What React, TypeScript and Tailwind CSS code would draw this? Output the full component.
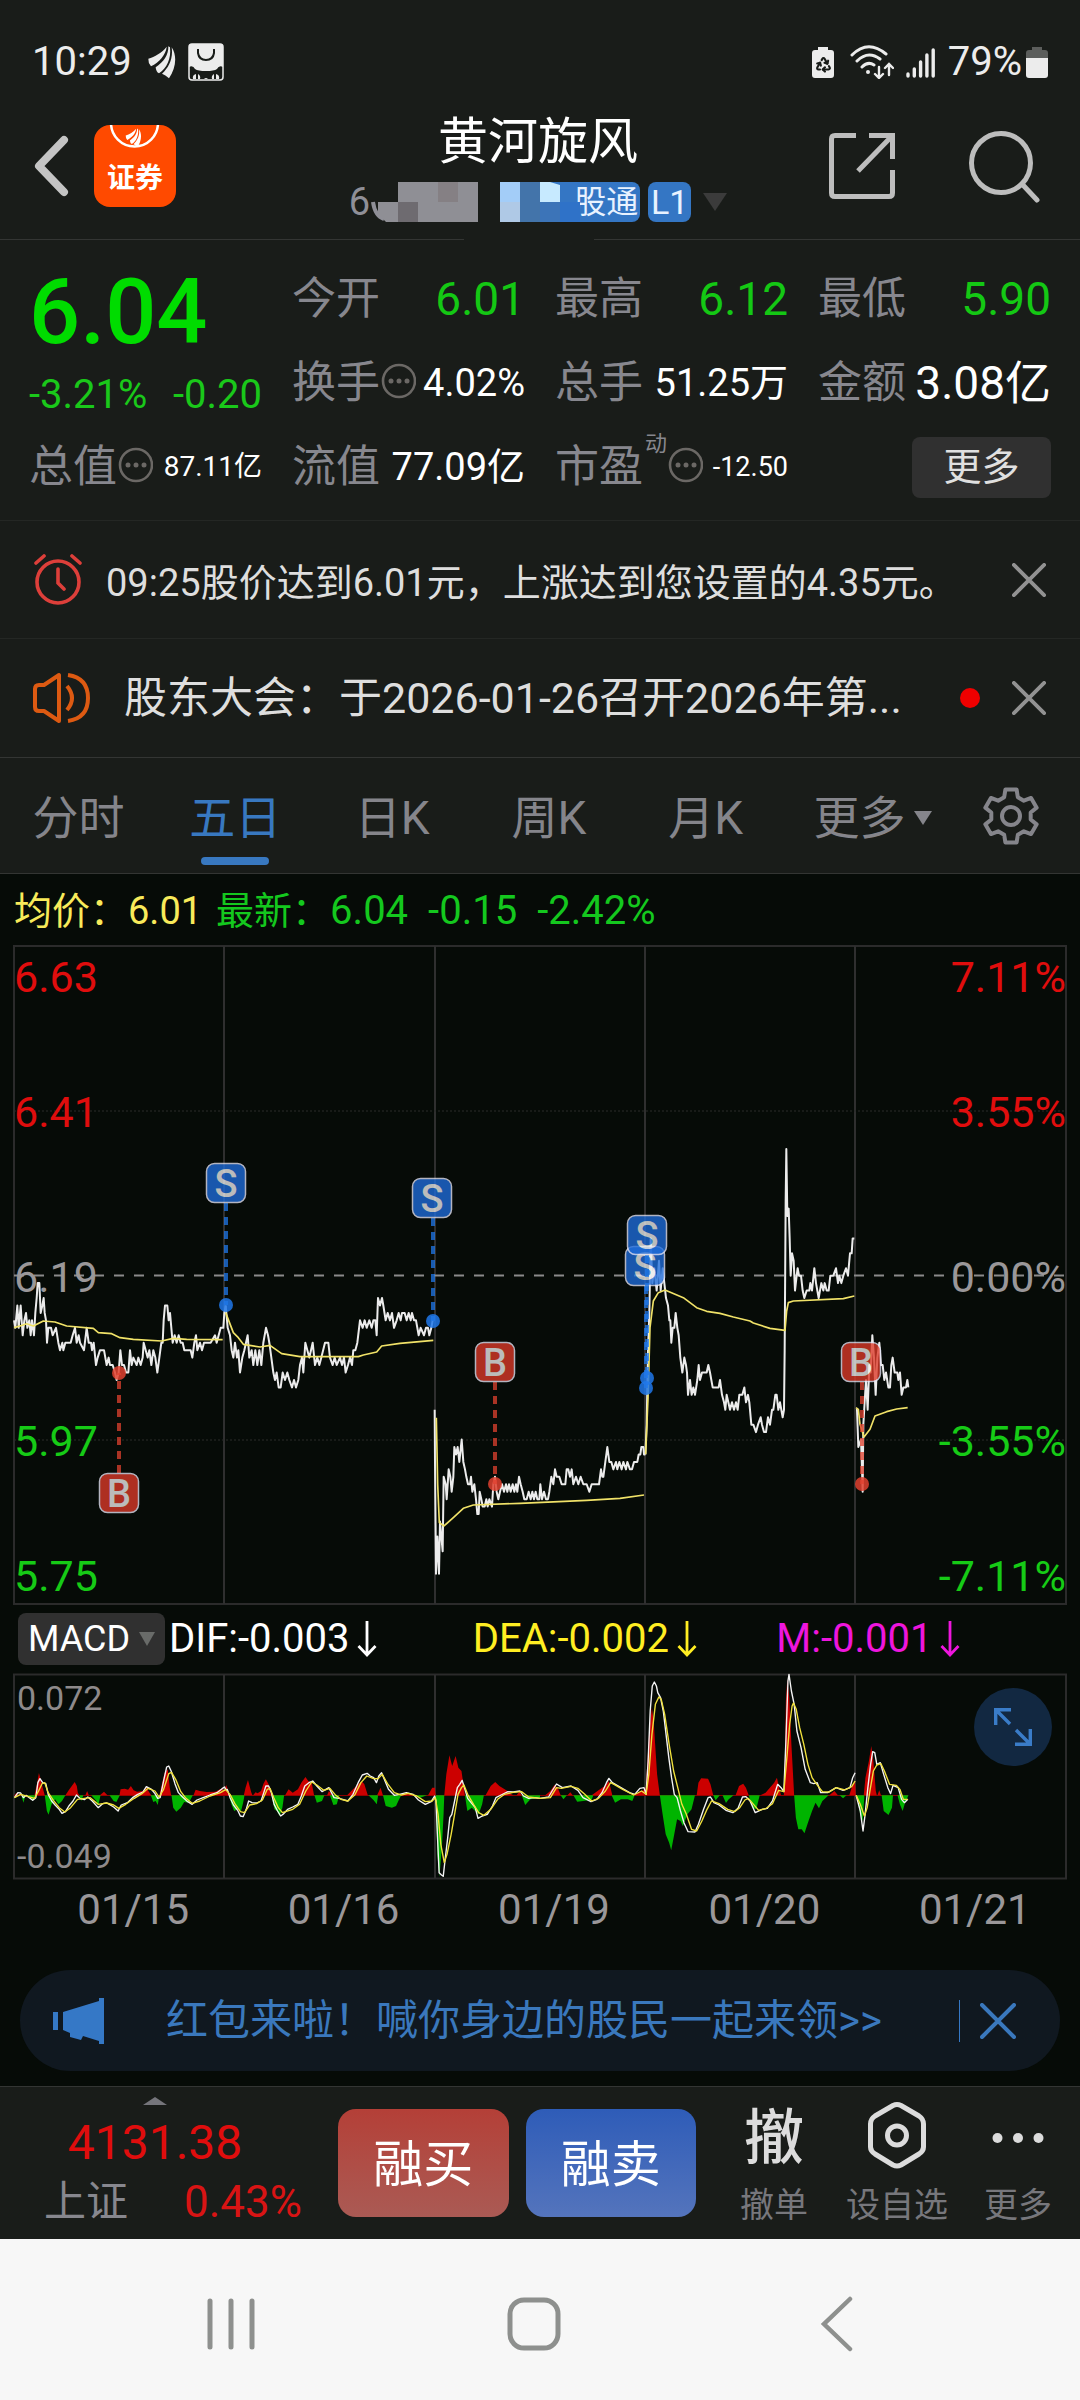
import React, { useState } from 'react';
import { Recycle } from 'lucide-react';

// --- Configuration ---
const TABS = ['分时', '五日', '日K', '周K', '月K', '更多'];
const DATES = ['01/15', '01/16', '01/19', '01/20', '01/21'];
const DAY_LINES = [14, 224, 435, 645, 855, 1066];

// --- Price data: "x,ticks below 6.19" for every trading day ---
const PRICE_DAYS = [
  {
    origin: 0,
    points:
      '42,6 46,7 52,4 56,7 62,4 68,8 73,6 78,5 82,7 88,6 92,8 96,6 102,8 106,5 110,3 113,1 118,1 122,5 127,4 131,3 134,5 138,6 141,9 145,7 153,7 158,8 168,7 175,9 180,10 187,9 190,10 196,9 212,9 218,8 225,7 230,9 236,8 240,9 252,10 260,7 266,9 273,9 276,10 281,9 288,12 293,11 300,10 312,10 320,12 326,11 330,12 338,12 345,13 350,14 356,13 361,10 366,12 372,12 378,13 385,13 390,10 395,12 400,11 410,12 415,11 422,12 428,11 431,9 437,10 443,11 448,10 454,12 460,10 466,11 472,13 478,11 484,9 488,9 491,6 495,4 502,4 506,6 510,5 514,7 518,9 524,8 530,9 536,8 542,9 548,9 553,10 572,10 577,11 583,9 588,8 592,10 600,9 606,10 612,9 632,9 645,8 650,9 656,8 662,7 670,7 673,5 677,4',
    average:
      '42,590 60,585 80,578 100,585 130,570 165,573 200,585 280,592 295,605 335,608 360,620 400,625 485,630 520,622 560,625 668,626',
  },
  {
    origin: 0,
    points:
      '677,4 683,7 690,8 695,10 700,11 705,9 711,11 715,10 720,13 727,11 733,10 738,9 743,8 748,11 755,10 760,12 766,10 772,12 778,10 784,12 790,9 798,7 804,8 808,9 814,11 820,13 825,14 830,13 836,15 842,15 848,13 855,14 862,13 868,14 876,15 882,14 888,15 895,14 900,12 906,11 910,13 916,9 922,10 928,11 933,10 938,9 945,12 952,11 958,12 964,11 975,9 985,9 990,11 998,12 1004,11 1010,12 1020,11 1026,12 1032,11 1037,13 1044,12 1050,11 1056,12 1060,10 1066,10 1072,9 1080,6 1088,7 1094,6 1100,7 1108,6 1115,7 1120,6 1126,6 1130,8 1134,3 1140,4 1146,3 1150,4 1157,6 1163,5 1170,6 1176,5 1182,7 1190,6 1196,5 1202,6 1206,5 1214,5 1220,6 1226,5 1232,6 1236,5 1242,6 1248,6 1256,8 1262,7 1272,8 1278,7 1284,7 1288,8 1294,7 1298,6',
    average:
      '677,545 700,605 715,620 730,640 780,648 810,643 845,668 900,677 1075,677 1090,672 1130,663 1145,645 1200,637 1300,628',
  },
  {
    origin: 420,
    points:
      '44,18 45,25 48,40 52,35 57,40 60,33 64,35 68,37 71,27 77,28 80,30 86,26 91,27 95,29 100,27 103,23 108,24 113,23 118,25 125,22 130,25 135,26 139,27 144,28 150,28 153,27 157,29 163,28 168,30 172,32 176,32 179,29 184,30 188,31 194,31 199,30 203,31 208,30 216,31 220,28 225,27 230,29 235,30 240,29 246,28 252,29 258,28 262,29 267,28 272,29 278,28 283,29 288,28 292,29 297,27 302,28 308,29 313,30 320,30 326,29 332,30 337,29 342,30 347,29 352,30 358,30 361,28 366,30 372,29 378,30 384,30 388,29 394,27 400,28 405,26 410,27 418,27 425,28 436,28 440,26 445,26 450,27 455,26 460,28 468,27 475,28 482,27 490,28 500,28 508,29 515,28 537,28 543,26 547,27 550,27 556,25 562,23 568,25 574,25 580,26 588,25 592,26 598,25 605,26 610,25 618,26 622,25 630,26 636,26 642,25 652,25 656,24 661,24 664,23 670,23 672,24 676,24',
    average:
      '49,860 53,1060 58,1175 72,1185 100,1160 130,1132 160,1122 300,1117 500,1108 600,1102 672,1092',
  },
  {
    origin: 420,
    points:
      '676,24 680,20 684,10 688,5 692,-5 697,1 703,-1 710,2 717,-2 722,2 728,-1 733,1 738,3 744,4 748,6 751,6 754,9 758,7 763,7 767,5 772,7 776,8 781,11 787,13 793,11 798,12 801,13 804,16 810,14 815,16 820,15 825,16 832,14 836,12 840,14 846,13 860,13 865,12 870,13 878,15 896,15 900,14 906,16 912,17 916,18 920,16 925,17 930,18 936,17 942,18 948,17 953,18 958,16 967,16 973,15 978,17 984,16 988,17 994,20 1000,20 1008,21 1014,20 1022,19 1026,20 1032,21 1038,21 1044,19 1050,20 1056,18 1060,18 1066,16 1070,16 1075,18 1080,17 1088,19 1092,18 1094,10 1097,-10 1099,-17 1102,-8 1106,-9 1109,-5 1112,0 1116,-3 1121,-2 1125,2 1130,0 1133,-1 1137,0 1143,0 1148,2 1153,3 1160,2 1168,2 1171,1 1176,2 1183,-1 1188,1 1196,3 1204,1 1210,2 1214,1 1220,2 1226,2 1231,0 1240,0 1248,-1 1254,1 1258,0 1264,1 1270,0 1278,-1 1284,0 1290,-3 1295,-3 1298,-5 1303,-5',
    average:
      '677,970 684,800 690,590 700,510 715,485 735,477 790,500 830,530 860,541 900,547 940,558 990,570 1000,576 1050,592 1095,598 1100,540 1105,515 1120,510 1270,503 1303,495',
  },
  {
    origin: 640,
    points:
      '648,18 651,18 655,23 663,22 666,26 668,29 670,20 674,17 678,14 683,18 688,12 692,13 697,8 702,11 707,16 712,11 718,9 723,12 728,12 733,14 738,13 745,15 750,15 754,12 758,11 764,13 772,13 775,14 780,13 785,16 790,15 798,15 802,14 805,15',
    average: '648,830 655,835 660,880 672,918 690,895 705,855 740,842 770,834 803,830',
  },
];

const MARKERS = [
  { side: 'B', x: 119, boxY: 548, dotX: 119, dotY: 428 },
  { side: 'S', x: 226, boxY: 238, dotX: 226, dotY: 360 },
  { side: 'S', x: 432, boxY: 253, dotX: 433, dotY: 376 },
  { side: 'B', x: 495, boxY: 417, dotX: 495, dotY: 539 },
  { side: 'S', x: 645, boxY: 321, dotX: 646, dotY: 443 },
  { side: 'S', x: 647, boxY: 290, dotX: 647, dotY: 433 },
  { side: 'B', x: 861, boxY: 417, dotX: 862, dotY: 539 },
];

const PRICE_LABELS = [
  { y: 47, price: '6.63', pct: '7.11%', fill: '#e00d0d' },
  { y: 182, price: '6.41', pct: '3.55%', fill: '#e00d0d' },
  { y: 347, price: '6.19', pct: '0.00%', fill: '#9a9799' },
  { y: 511, price: '5.97', pct: '-3.55%', fill: '#16cb16' },
  { y: 646, price: '5.75', pct: '-7.11%', fill: '#16cb16' },
];

// --- MACD data, left and right half of the panel ---
const MACD_HALVES = [
  {
    origin: 0,
    red: 'M42,583 48,575 52,583M100,583 108,545 113,516 118,535 124,560 130,583M190,583 200,567 210,553 217,543 223,555 226,575 230,583M248,583 253,570 258,583M290,583 302,572 312,583M347,583 350,565 362,563 372,566 380,555 388,568 398,572 415,570 425,560 437,580 440,583M463,583 470,550 478,515 487,505 493,560 497,583M562,583 568,566 580,570 600,573 625,572 645,562 650,570 657,552 663,570 668,583M708,583 713,560 720,537 726,560 730,575 733,583M735,583 742,574 748,577 758,570 765,548 772,535 780,550 787,583M828,583 838,565 850,575 865,565 875,545 887,528 895,540 905,545 912,583M950,583 955,570 960,575 964,583M1008,583 1025,565 1040,550 1050,540 1058,550 1068,583M1095,583 1105,560 1112,583M1165,583 1180,574 1195,583M1243,583 1255,560 1263,560 1265,583M1290,583 1296,520 1305,463 1313,495 1323,465 1331,500 1340,510 1350,583M1410,583 1425,555 1438,543 1450,555 1470,568 1485,580 1490,583M1500,583 1508,572 1515,583',
    green:
      'M62,583 68,605 74,583M78,583 90,590 95,600 102,583M130,583 136,630 141,641 150,610 160,595 170,610 180,600 190,583M230,583 236,600 242,583M265,583 280,600 285,615 292,583M318,583 330,600 338,603 348,583M438,583 445,603 452,600 458,612 463,583M498,583 503,620 512,632 525,620 535,603 548,605 560,583M665,583 672,610 680,630 690,625 700,630 706,605 710,583M788,583 797,625 804,630 812,645 820,620 825,583M913,583 920,605 935,600 942,583M958,583 968,612 978,610 985,583M1070,583 1085,598 1094,610 1098,583M1112,583 1120,615 1138,620 1150,615 1158,597 1165,583M1200,583 1220,590 1240,583M1265,583 1270,760 1276,827 1283,740 1288,640 1290,583M1350,583 1357,630 1370,620 1390,640 1400,610 1405,583M1515,583 1525,612 1540,595 1568,590 1568,583',
    dif: [
      '42,590 52,575 60,576 68,590 76,583 85,590 95,598 104,590 110,545 116,533 124,545 133,548 140,580 150,600 160,612 172,625 180,637 190,632 200,615 212,600 222,582 232,592 245,596 255,588 268,600 285,620 298,608 310,606 330,618 343,630 352,612 370,605 385,590 400,580 415,573 425,557 440,565 450,578 458,592 465,590 475,540 484,498 490,495 497,510 508,548 518,575 530,588 545,602 558,610 572,597 590,590 610,582 630,575 645,563 652,558 655,565 660,565 668,590 678,612 690,628 698,645 706,647 715,625 722,600 732,605 745,606 758,600 766,575 772,555 780,555 788,575 796,610 806,630 815,645 822,640 835,625 850,618 865,610 875,585 885,555 897,545 908,540 920,555 935,572 955,560 970,590 985,592 1010,600 1025,580 1040,545 1052,522 1066,517 1075,525 1085,530 1093,545 1100,525 1108,515 1118,540 1128,565 1145,583 1160,580 1180,575 1200,580 1215,597 1235,610 1252,602 1262,585 1266,600 1270,700 1275,815 1282,822 1287,826 1292,780 1300,710 1306,650 1312,640 1320,600 1328,560 1335,550 1342,538 1350,565 1358,592 1368,605 1380,620 1388,652 1400,645 1415,640 1430,615 1440,590 1455,582 1475,572 1490,573 1510,570 1520,585 1535,592 1550,590 1568,592',
    ],
    dea: [
      '42,590 60,580 80,586 100,592 112,570 122,548 130,545 140,575 155,598 172,620 188,633 205,620 225,595 245,592 262,590 285,610 310,606 330,612 345,622 365,610 390,592 412,578 430,562 450,570 462,588 475,565 490,518 498,514 510,535 525,572 540,592 558,607 580,600 610,585 640,575 655,566 668,580 682,608 698,632 710,635 725,612 745,608 762,597 776,565 784,562 795,590 808,620 820,635 850,625 870,610 888,570 905,543 920,552 940,568 958,562 975,583 990,595 1010,600 1030,582 1048,545 1065,525 1085,533 1098,533 1110,520 1125,548 1145,575 1165,582 1185,577 1210,585 1235,602 1255,600 1264,590 1272,640 1280,730 1290,785 1298,760 1310,700 1320,640 1330,580 1340,560 1347,552 1358,580 1375,610 1390,635 1405,643 1425,625 1445,595 1465,580 1490,574 1515,572 1535,588 1568,592',
    ],
  },
  {
    origin: 540,
    red: 'M15,583 30,570 42,552 52,562 60,583M80,583 88,574 95,583M150,583 170,568 188,555 200,540 210,583M275,583 290,572 300,568 307,560 312,480 318,380 325,320 330,360 335,440 340,520 348,583M455,583 460,545 468,532 488,533 495,550 503,583M568,583 578,555 590,548 598,560 606,583M640,583 655,575 680,545 688,530 694,560 700,583M708,583 710,540 714,300 718,235 724,290 730,430 738,583M840,583 855,570 865,583M898,583 905,560 915,540 917,583M940,583 945,530 955,480 962,435 968,480 975,570 978,583M980,583 985,568 990,583',
    green:
      'M60,583 68,595 78,583M97,583 108,602 125,600 150,596 155,583M208,583 218,605 235,595 255,595 268,600 275,583M348,583 356,640 365,700 375,725 381,748 388,710 398,655 408,660 415,675 428,640 440,625 450,583M503,583 510,598 522,583M530,583 540,606 548,595 562,583M606,583 618,620 628,625 638,583M738,583 743,650 750,685 760,685 768,697 778,665 790,630 800,605 810,622 820,600 838,583M870,583 880,592 890,583M920,583 930,640 937,660 942,583M992,583 998,630 1012,642 1022,620 1025,583M1038,583 1045,610 1053,630 1060,605 1070,583',
    dif: [
      '0,592 25,588 35,570 48,549 65,560 90,555 110,568 125,590 148,602 165,595 180,575 193,545 200,532 210,545 235,560 260,575 275,580 290,562 302,560 308,580 314,480 320,330 326,255 332,243 338,255 342,275 350,290 358,330 366,400 374,470 382,530 390,580 398,590 408,630 418,665 430,692 450,693 460,670 475,625 488,590 495,588 505,605 520,612 540,628 560,635 575,622 588,588 598,587 610,600 625,635 645,625 660,622 675,600 690,550 700,560 708,572 714,420 720,240 723,220 730,270 738,310 746,390 758,440 770,505 785,545 795,548 805,545 815,575 835,575 860,560 880,568 900,560 908,530 915,515',
      '918,583 930,630 938,690 944,640 952,560 960,490 966,452 972,455 978,490 988,485 998,520 1010,560 1018,578 1025,553 1040,560 1050,595 1058,605 1068,595',
    ],
    dea: [
      '0,592 30,590 48,560 62,562 90,556 110,562 130,580 150,600 170,592 190,570 205,545 215,550 240,565 272,582 295,570 308,580 316,520 325,400 335,310 345,288 352,295 362,340 375,430 388,510 400,560 412,610 425,640 440,685 455,690 470,660 485,625 498,600 520,608 545,625 565,632 580,620 595,597 605,592 620,610 635,628 655,623 675,608 693,568 708,572 716,480 725,370 732,315 736,306 744,325 754,380 766,430 778,490 790,530 802,548 820,572 840,573 860,560 885,567 905,557 915,540',
      '918,583 930,610 942,645 950,620 958,570 968,510 978,492 990,488 1000,510 1015,550 1035,553 1045,565 1055,595 1068,595',
    ],
  },
];

const priceToPoints = (points: string) =>
  points
    .split(' ')
    .map(p => {
      const [x, ticks] = p.split(',').map(Number);
      return `${x},${434 + ticks * 22.35}`;
    })
    .join(' ');

// --- Icons ---
const BirdIcon = ({ className }: { className?: string }) => (
  <svg viewBox="0 0 84 100" className={className} fill="currentColor">
    <path d="M1 40C20 34 42 22 56 4C54 28 34 50 9 63Q0 52 1 40Z" />
    <path d="M61 3C62 30 46 50 23 66Q24 80 33 84C56 70 70 40 66 6Z" />
    <path d="M71 6C76 40 62 66 42 85Q52 88 63 99C84 70 88 30 71 6Z" />
  </svg>
);

const CloseIcon = ({ className }: { className?: string }) => (
  <svg viewBox="0 0 36 36" className={className} stroke="currentColor" strokeWidth="4" strokeLinecap="round">
    <path d="M2 2L34 34M34 2L2 34" />
  </svg>
);

const InfoDots = () => (
  <svg viewBox="0 0 36 36" className="-mt-1 size-9 shrink-0" fill="none">
    <circle cx="19" cy="18" r="16" stroke="#6b6865" strokeWidth="2.6" />
    <g fill="#6b6865">
      <circle cx="11" cy="18" r="2.5" />
      <circle cx="19" cy="18" r="2.5" />
      <circle cx="27" cy="18" r="2.5" />
    </g>
  </svg>
);

const DownArrow = () => (
  <svg viewBox="0 0 20 38" className="ml-2 h-[38px] w-5" fill="none" stroke="currentColor" strokeWidth="2.8">
    <path d="M10 1V35M1.500 26L10 35L18.500 26" />
  </svg>
);

const GearIcon = () => {
  const points = Array.from({ length: 6 }, (_, i) => i * 60 - 90)
    .flatMap(a => [
      [a - 20, 20],
      [a - 12, 27],
      [a + 12, 27],
      [a + 20, 20],
    ])
    .map(([a, r]) => `${30 + r * Math.cos((a * Math.PI) / 180)},${30 + r * Math.sin((a * Math.PI) / 180)}`)
    .join(' ');
  return (
    <svg viewBox="0 0 60 60" className="size-[60px]" fill="none" stroke="#85858b" strokeWidth="4" strokeLinejoin="round">
      <polygon points={points} />
      <circle cx="30" cy="30" r="9" />
    </svg>
  );
};

// --- Sections ---
const StatusBar = () => (
  <div className="flex h-[100px] items-center justify-between px-8 pt-6 text-[40px] leading-none text-[#ececec]">
    <div className="flex items-center">
      <span>10:29</span>
      <BirdIcon className="ml-4 h-[34px] w-7" />
      <svg viewBox="0 0 36 38" className="ml-3 h-[38px] w-9">
        <rect x="1" y="1" width="34" height="36" rx="3" fill="#191c19" stroke="#ececec" strokeWidth="1.5" />
        <path d="M1 3Q1 1 3 1H33Q35 1 35 3V24Q31 22 29 26Q26 28 18 28Q10 28 7 26Q5 22 1 24Z" fill="#ececec" />
        <path d="M10 6V10Q11 17 18 17Q25 17 26 10V6" fill="none" stroke="#191c19" strokeWidth="2" />
        <path d="M5 36Q4 32 8 31V36ZM10 36V31Q13 33 12 36ZM24 36Q23 33 26 31V36ZM28 36V31Q32 32 31 36ZM16 36Q18 34 20 36Z" fill="#ececec" />
      </svg>
    </div>
    <div className="flex items-center">
      <div className="relative">
        <svg viewBox="0 0 22 32" className="h-8 w-[22px]" fill="currentColor">
          <path d="M6 1H16V4H19Q22 4 22 7V29Q22 32 19 32H3Q0 32 0 29V7Q0 4 3 4H6Z" />
        </svg>
        <Recycle size={17} strokeWidth={3} className="absolute top-[10px] left-[3px] text-[#191c19]" />
      </div>
      <svg viewBox="0 0 44 34" className="ml-4 h-[34px] w-11" fill="none" stroke="currentColor" strokeWidth="3" strokeLinecap="round">
        <path d="M2 10Q18 -6 36 9M7 16Q18 5 30 14M12 22Q18 16 24 20" />
        <circle cx="18" cy="27" r="2" fill="currentColor" stroke="none" />
        <path d="M29 22V32M25 29L29 33L33 29M39 30V20M35 23L39 19L43 23" strokeWidth="2.4" />
      </svg>
      <svg viewBox="0 0 30 32" className="ml-3 h-8 w-[30px]" stroke="currentColor" strokeWidth="3.4" strokeLinecap="round">
        <path d="M2 28V30M8.300 23V30M14.600 16V30M20.900 9V30M27.200 4V30" />
      </svg>
      <span className="ml-3">79%</span>
      <svg viewBox="0 0 22 32" className="ml-1 h-8 w-[22px]">
        <path d="M6 1H16V4H19Q22 4 22 7V12H0V7Q0 4 3 4H6Z" fill="#5c5e5c" />
        <path d="M0 12H22V29Q22 32 19 32H3Q0 32 0 29Z" fill="currentColor" />
      </svg>
    </div>
  </div>
);

const Header = () => (
  <header>
    <div className="grid h-[139px] grid-cols-[1fr_auto_1fr] items-center px-8 pb-2">
      <div className="flex items-center gap-6">
        <button aria-label="返回">
          <svg viewBox="0 0 38 64" className="h-16 w-[38px]" fill="none" stroke="#c4c4c4" strokeWidth="8" strokeLinecap="round" strokeLinejoin="round">
            <path d="M32 6L7 32L32 58" />
          </svg>
        </button>
        <a href="#home" className="relative flex size-[82px] items-end justify-center overflow-hidden rounded-2xl bg-[#ff4a00] pb-3 text-[28px] leading-8 font-bold text-white">
          <svg viewBox="0 0 82 82" className="absolute inset-0 size-full" fill="none" stroke="white" strokeWidth="2.5">
            <path d="M17 -2A23.500 23.500 0 1 0 64 -2" />
          </svg>
          <BirdIcon className="absolute top-[3px] left-[31px] h-[19px] w-[17px]" />
          证券
        </a>
      </div>

      <div className="flex flex-col items-center pr-1">
        <h1 className="text-[50px] leading-[72px] text-white">黄河旋风</h1>
        <div className="flex h-12 items-center text-[38px] leading-10 text-[#8f8f97]">
          <span>6</span>
          <svg viewBox="0 0 110 40" className="h-10 w-[110px]">
            <path d="M3 20Q5 34 14 37" fill="none" stroke="#8f8f97" strokeWidth="4" />
            <path d="M8 20H28V0H108V40H16L8 32Z" fill="#8f8f95" />
            <path d="M68 0H88V20H68Z" fill="#858084" />
            <path d="M28 20H48V40H28Z" fill="#6e6b70" />
          </svg>
          <span className="relative ml-5 flex h-10 w-[140px] items-center justify-end rounded-lg bg-[#3476c4] pr-[2px] text-[32px] text-[#e8f2ff]">
            股通
            <svg viewBox="0 0 80 40" className="absolute top-0 left-0 h-10 w-20">
              <path d="M0 0H20V20H0Z" fill="#a3cdf8" />
              <path d="M0 20H20V40H0Z" fill="#afc9e6" />
              <path d="M20 0H40V40H20Z" fill="#4374aa" />
              <path d="M40 0H50L60 3V20H40Z" fill="#c7eaff" />
              <path d="M40 20H60V40H40Z" fill="#3c74b8" />
              <path d="M60 20H80V40H60Z" fill="#2f72c8" />
            </svg>
          </span>
          <span className="ml-2 flex h-10 w-[43px] items-center justify-center rounded-lg bg-[#3476c4] text-[34px] text-[#e8f2ff]">L1</span>
          <svg viewBox="0 0 24 18" className="ml-3 h-[18px] w-6">
            <path d="M0 0H24L12 18Z" fill="#3b3b3b" />
          </svg>
        </div>
      </div>

      <div className="flex items-center justify-end gap-[72px] pr-2">
        <button aria-label="分享">
          <svg viewBox="0 0 68 68" className="size-[68px]" fill="none" stroke="#bdbdbd" strokeWidth="5">
            <path d="M28 3.500H7Q3.500 3.500 3.500 7V61Q3.500 64.500 7 64.500H61Q64.500 64.500 64.500 61V38M41 3.500H64.500V27M64 4L30 39" strokeLinejoin="miter" />
          </svg>
        </button>
        <button aria-label="搜索">
          <svg viewBox="0 0 72 74" className="h-[74px] w-[72px]" fill="none" stroke="#bdbdbd" strokeWidth="5" strokeLinecap="round">
            <circle cx="33" cy="34" r="29.500" />
            <path d="M54 55L69 71" />
          </svg>
        </button>
      </div>
    </div>
    <div className="flex h-px justify-between">
      <div className="w-[43%] bg-[#333533]" />
      <div className="w-[45%] bg-[#333533]" />
    </div>
  </header>
);

type QuoteProps = { label: string; value: string; valueClass: string; info?: boolean; note?: string };

const Quote: React.FC<QuoteProps> = ({ label, value, valueClass, info, note }) => (
  <div className="flex h-[84px] items-center justify-between whitespace-nowrap">
    <dt className="flex items-center text-[44px] leading-[56px] text-[#87878e]">
      {label}
      {note && <sup className="mb-6 ml-[2px] text-[22px] leading-6">{note}</sup>}
      {info && <InfoDots />}
    </dt>
    <dd className={valueClass}>{value}</dd>
  </div>
);

const QuotePanel = () => (
  <section className="border-b border-[#242724] px-[29px] pt-[17px] pb-[11px]">
    <dl className="grid grid-cols-4 gap-x-[30px]">
      <div className="row-span-2 pt-1 whitespace-nowrap">
        <dd className="text-[90px] leading-[104px] font-medium text-[#00dc00]">6.04</dd>
        <dd className="flex justify-between text-[40px] leading-[60px] text-[#1ac81a]">
          <span>-3.21%</span>
          <span>-0.20</span>
        </dd>
      </div>
      <Quote label="今开" value="6.01" valueClass="text-[46px] text-[#14c814]" />
      <Quote label="最高" value="6.12" valueClass="text-[46px] text-[#14c814]" />
      <Quote label="最低" value="5.90" valueClass="text-[46px] text-[#14c814]" />
      <Quote label="换手" value="4.02%" valueClass="text-[38px] text-white" info />
      <Quote label="总手" value="51.25万" valueClass="text-[38px] text-white" />
      <Quote label="金额" value="3.08亿" valueClass="text-[46px] text-white" />
      <Quote label="总值" value="87.11亿" valueClass="text-[28px] text-white" info />
      <Quote label="流值" value="77.09亿" valueClass="text-[38px] text-white" />
      <Quote label="市盈" value="-12.50" valueClass="text-[27px] text-white" info note="动" />
      <div className="flex items-center justify-end">
        <button className="h-[61px] w-[139px] rounded-lg bg-[#303030] text-[38px] leading-[56px] text-[#e0e0e0]">更多</button>
      </div>
    </dl>
  </section>
);

const Notices = () => {
  const [closed, setClosed] = useState<number[]>([]);

  return (
    <section className="text-[#dedede]">
      {!closed.includes(1) && (
        <div className="flex h-[118px] items-center border-b border-[#242724] px-8">
          <svg viewBox="0 0 52 52" className="size-[52px]" fill="none" stroke="#dd3f3a" strokeWidth="3.6" strokeLinecap="round">
            <circle cx="26" cy="28" r="21" />
            <path d="M26 15V29L32 35M4 9L12 2M48 9L40 2" />
          </svg>
          <p className="ml-[22px] flex-1 pt-[6px] text-[38px] leading-[50px] whitespace-nowrap">09:25股价达到6.01元，上涨达到您设置的4.35元。</p>
          <button aria-label="关闭提醒" onClick={() => setClosed([...closed, 1])}>
            <CloseIcon className="mr-[2px] size-[34px] text-[#929292]" />
          </button>
        </div>
      )}
      {!closed.includes(2) && (
        <div className="flex h-[119px] items-center border-b border-[#333533] px-8">
          <svg viewBox="0 0 58 52" className="h-[52px] w-[58px]" fill="none" stroke="#dd5a12" strokeWidth="4" strokeLinejoin="round">
            <path d="M27 3V49L12 39H7Q3 39 3 35V17Q3 13 7 13H12Z" />
            <path d="M35 14Q45 26 35 38M36 3Q56 6 56 26Q56 46 36 49" />
          </svg>
          <p className="ml-[34px] flex-1 text-[43px] leading-[56px] whitespace-nowrap">股东大会：于2026-01-26召开2026年第...</p>
          <span className="mr-8 size-5 rounded-full bg-[#f00000]" />
          <button aria-label="关闭公告" onClick={() => setClosed([...closed, 2])}>
            <CloseIcon className="mr-[2px] size-[34px] text-[#929292]" />
          </button>
        </div>
      )}
    </section>
  );
};

const ChartTabs = () => {
  const [active, setActive] = useState('五日');

  return (
    <nav className="flex h-[116px] items-stretch border-b border-[#333533]">
      <div className="grid flex-1 grid-cols-6">
        {TABS.map(tab => (
          <button
            key={tab}
            onClick={() => setActive(tab)}
            className={`relative flex items-center justify-center pt-1 text-[46px] leading-[60px] whitespace-nowrap ${tab === active ? 'text-[#3878c0]' : 'text-[#85858b]'}`}
          >
            <span className={tab === '更多' ? 'ml-5' : ''}>{tab}</span>
            {tab === '更多' && (
              <svg viewBox="0 0 18 14" className="ml-2 h-[14px] w-[18px]">
                <path d="M0 0H18L9 14Z" fill="currentColor" />
              </svg>
            )}
            {tab === active && <span className="absolute bottom-2 left-1/2 h-2 w-[68px] -translate-x-1/2 rounded-full bg-[#3878c0]" />}
          </button>
        ))}
      </div>
      <button aria-label="设置" className="flex w-[139px] items-center justify-center">
        <GearIcon />
      </button>
    </nav>
  );
};

const PriceChart = () => (
  <svg viewBox="0 0 1080 660" className="block h-auto w-full" fill="none">
    <path d="M14 1H1066V659H14Z" stroke="#2b2b2b" strokeWidth="2" />
    {DAY_LINES.slice(1, 5).map(x => (
      <path key={x} d={`M${x} 1V659`} stroke="#2f2f2f" strokeWidth="2" />
    ))}
    <path d="M14 166H1066M14 495H1066" stroke="#2a2c2a" strokeDasharray="2 2" />
    <path d="M14 330.500H1066" stroke="#8a8a8a" strokeWidth="2" strokeDasharray="10 10" />

    {PRICE_LABELS.map(l => (
      <g key={l.price} fill={l.fill} fontSize="43">
        <text x="14" y={l.y}>{l.price}</text>
        <text x="1066" y={l.y} textAnchor="end">{l.pct}</text>
      </g>
    ))}

    {PRICE_DAYS.map((day, i) => (
      <g key={i} transform={`translate(${day.origin} 186) scale(0.33333)`} strokeLinejoin="round">
        <polyline points={priceToPoints(day.points)} stroke="#ececec" strokeWidth="6" />
        <polyline points={day.average} stroke="#f0e268" strokeWidth="5" />
      </g>
    ))}

    {MARKERS.map((m, i) => {
      const color = m.side === 'S' ? '#2078ea' : '#e0412f';
      return (
        <g key={i}>
          <path d={`M${m.dotX} ${m.dotY > m.boxY ? m.boxY + 20 : m.boxY - 20}V${m.dotY}`} stroke={color} strokeWidth="4" strokeDasharray="8 6" opacity="0.75" />
          <circle cx={m.dotX} cy={m.dotY} r="7" fill={color} opacity="0.85" />
          <g opacity="0.78">
            <rect x={m.x - 19.5} y={m.boxY - 19.5} width="39" height="39" rx="8" fill={m.side === 'S' ? '#1f6ddc' : '#de3a29'} stroke="#e4e4f4" strokeWidth="1.500" />
            <text x={m.x} y={m.boxY + 14} fill="#eeeeee" fontSize="38" fontWeight="500" textAnchor="middle">{m.side}</text>
          </g>
        </g>
      );
    })}
  </svg>
);

const MacdChart = () => (
  <div className="relative">
    <svg viewBox="0 0 1080 208" className="block h-auto w-full" fill="none">
      <path d="M14 1.500H1066V205.500H14Z" stroke="#2b2b2b" strokeWidth="2" />
      {DAY_LINES.slice(1, 5).map(x => (
        <path key={x} d={`M${x} 2V205`} stroke="#2f2f2f" strokeWidth="2" />
      ))}
      <path d="M14 122.500H908" stroke="#8a0000" />
      <g fill="#8e8a8b" fontSize="34">
        <text x="17" y="37">0.072</text>
        <text x="17" y="195">-0.049</text>
      </g>
      {MACD_HALVES.map(half => (
        <g key={half.origin} transform={`translate(${half.origin} -72) scale(0.34439 0.33333)`} strokeLinejoin="round">
          <path d={half.red} fill="#cc0000" />
          <path d={half.green} fill="#00b400" />
          {half.dif.map(points => (
            <polyline key={points} points={points} stroke="#f4f4f4" strokeWidth="4" />
          ))}
          {half.dea.map(points => (
            <polyline key={points} points={points} stroke="#f0e13c" strokeWidth="4" />
          ))}
        </g>
      ))}
    </svg>
    <button aria-label="全屏" className="absolute top-[15px] right-7 flex size-[78px] items-center justify-center rounded-full bg-[#122841]">
      <svg viewBox="0 0 40 40" className="size-10" fill="none" stroke="#3a7cc8" strokeWidth="3.4">
        <path d="M18 2.700H2.700V18M3 3L17 17M22 37.300H37.300V22M37 37L23 23" />
      </svg>
    </button>
  </div>
);

const ChartPanel = () => (
  <section className="bg-[#060b07]">
    <div className="flex h-[71px] items-center px-[14px] pt-[2px] text-[38px] leading-[50px] whitespace-pre">
      <span className="text-[#f8ea5a]">均价：6.01</span>
      <span className="ml-[14px] text-[#14c81e]">最新：</span>
      <div className="flex gap-5 text-[40px] text-[#14c81e]">
        <span>6.04</span>
        <span>-0.15</span>
        <span>-2.42%</span>
      </div>
    </div>
    <PriceChart />
    <div className="flex h-[68px] items-center text-[40px] leading-[50px] whitespace-nowrap">
      <button className="ml-[18px] flex h-[52px] w-[147px] items-center justify-between rounded-lg bg-[#303030] px-[10px] text-[36px] text-white">
        MACD
        <svg viewBox="0 0 16 14" className="h-[14px] w-4">
          <path d="M0 0H16L8 14Z" fill="#696b69" />
        </svg>
      </button>
      <div className="ml-1 grid flex-1 grid-cols-3">
        <span className="flex items-center text-white">DIF:-0.003<DownArrow /></span>
        <span className="flex items-center text-[#ffee22]">DEA:-0.002<DownArrow /></span>
        <span className="flex items-center text-[#ee16dd]">M:-0.001<DownArrow /></span>
      </div>
    </div>
    <MacdChart />
    <div className="grid h-[58px] grid-cols-5 items-center pl-7 text-center text-[42px] leading-none text-[#9a9799]">
      {DATES.map(d => (
        <span key={d}>{d}</span>
      ))}
    </div>
    <div className="px-5 pt-[31px] pb-[15px]">
      <div className="flex h-[101px] items-center rounded-full bg-[#101820] pr-11 pl-8 text-[#3a78bd]">
        <svg viewBox="0 0 54 46" className="h-[46px] w-[54px]" fill="#3578c6">
          <path d="M1 14H6V32H1ZM11 14L47 3V0H52V46H47V43L31 38L29 42L18 39V35L11 32Z" />
        </svg>
        <a href="#promo" className="ml-[60px] flex-1 text-[42px] leading-[56px] whitespace-nowrap">红包来啦！喊你身边的股民一起来领&gt;&gt;</a>
        <span className="mr-5 h-[42px] w-px bg-[#3578c6]" />
        <button aria-label="关闭推广">
          <CloseIcon className="size-9" />
        </button>
      </div>
    </div>
  </section>
);

const BottomBar = () => (
  <footer className="flex h-[153px] items-start border-t border-[#333533] whitespace-nowrap">
    <div className="flex w-[338px] flex-col items-center pt-[10px] pr-7">
      <svg viewBox="0 0 24 8" className="h-2 w-6">
        <path d="M0 8L12 0L24 8Z" fill="#75757b" />
      </svg>
      <span className="text-[48px] leading-[76px] text-[#e00d0d]">4131.38</span>
      <div className="flex w-full justify-between pr-2 pl-11 text-[44px] leading-[42px]">
        <span className="text-[42px] text-[#87878e]">上证</span>
        <span className="text-[#d81414]">0.43%</span>
      </div>
    </div>
    <div className="grid flex-1 grid-cols-2 gap-[17px] pt-[22px] text-[50px] leading-[112px] text-white">
      <button className="h-[108px] rounded-[18px] bg-linear-to-b from-[#b43f37] to-[#aa5a54]">融买</button>
      <button className="h-[108px] rounded-[18px] bg-linear-to-b from-[#2e5cb8] to-[#5474bc]">融卖</button>
    </div>
    <div className="flex w-[384px] pt-[14px] pl-6 text-[34px] leading-[48px] text-[#77777c]">
      <button className="flex w-[108px] flex-col items-center">
        <span className="h-[72px] text-[60px] leading-[76px] font-medium text-[#dcdcdc]">撤</span>
        <span className="mt-2">撤单</span>
      </button>
      <button className="flex w-[138px] flex-col items-center">
        <svg viewBox="0 0 72 72" className="size-[72px]" fill="none" stroke="#dcdcdc" strokeWidth="5" strokeLinejoin="round">
          <path d="M32 4.500Q36 2.500 40 4.500L58 15Q62.500 18 62.500 23V46Q62.500 50 58 53L40 64Q36 66 32 64L14 53Q9.500 50 9.500 46V23Q9.500 18 14 15Z" />
          <circle cx="36" cy="34.500" r="9.500" />
        </svg>
        <span className="mt-2">设自选</span>
      </button>
      <button className="flex w-[104px] flex-col items-center">
        <svg viewBox="0 0 72 72" className="size-[72px]" fill="#dcdcdc">
          <circle cx="15.500" cy="37" r="5" />
          <circle cx="36" cy="37" r="5" />
          <circle cx="56.500" cy="37" r="5" />
        </svg>
        <span className="mt-2">更多</span>
      </button>
    </div>
  </footer>
);

const SystemNav = () => (
  <nav className="grid flex-1 grid-cols-3 place-items-center bg-[#f7f7f7] pt-14 pr-[92px] pb-12 pl-20 text-[#8e908e]">
    <button aria-label="最近任务">
      <svg viewBox="0 0 56 56" className="size-14" stroke="currentColor" strokeWidth="5" strokeLinecap="round">
        <path d="M7 5V51M28 5V51M49 5V51" />
      </svg>
    </button>
    <button aria-label="主屏幕">
      <svg viewBox="0 0 56 56" className="size-14" fill="none" stroke="currentColor" strokeWidth="5">
        <rect x="4" y="4" width="48" height="48" rx="14" />
      </svg>
    </button>
    <button aria-label="系统返回">
      <svg viewBox="0 0 56 56" className="size-14" fill="none" stroke="currentColor" strokeWidth="4.500" strokeLinecap="round">
        <path d="M41 3L15 28L41 53" />
      </svg>
    </button>
  </nav>
);

const App: React.FC = () => {
  return (
    <div className="flex min-h-screen flex-col bg-[#191c19] font-[Roboto,'Noto_Sans_CJK_SC',sans-serif]">
      <StatusBar />
      <Header />
      <main>
        <QuotePanel />
        <Notices />
        <ChartTabs />
        <ChartPanel />
      </main>
      <BottomBar />
      <SystemNav />
    </div>
  );
};

export default App;
